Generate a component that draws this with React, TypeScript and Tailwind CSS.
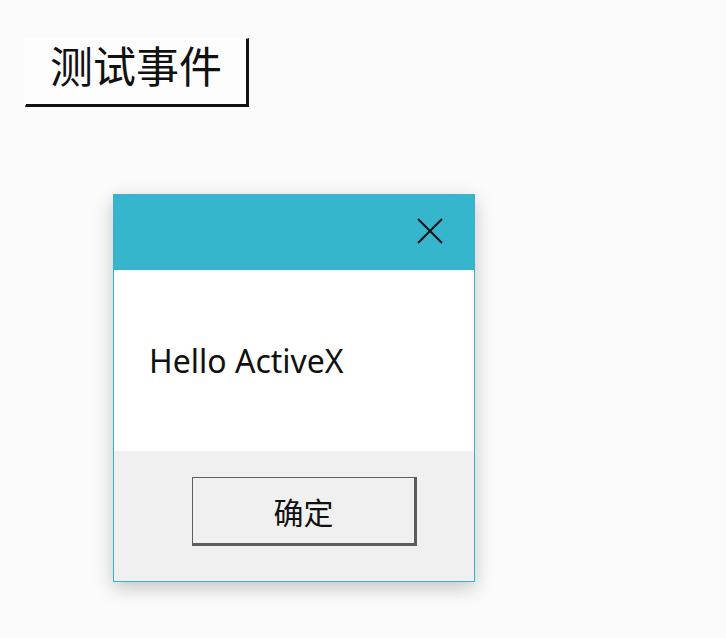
import { FC } from "react";

/**
 * Close glyph for the dialog title bar.
 */
const CloseIcon: FC = () => (
  <svg width="26" height="26" viewBox="0 0 26 26" fill="none">
    <path d="M1 1L25 25M25 1L1 25" stroke="#111" strokeWidth="2" />
  </svg>
);

/**
 * ActiveX message box demo.
 */
const App: FC = () => {
  return (
    <div className="min-h-[638px] w-full bg-[#fbfbfb] pt-[38px] pl-[25px] font-['Noto_Sans','Noto_Sans_CJK_SC',sans-serif] text-[#111]">
      <button className="flex h-[69px] w-[224px] items-center justify-center border-t border-l border-white border-r-[3px] border-b-[3px] border-r-[#111] border-b-[#111] bg-[#fdfdfd] pb-[14px] text-[43px] leading-none font-['Noto_Sans_CJK_SC',sans-serif]">
        测试事件
      </button>

      <div className="mt-[87px] ml-[88px] flex h-[388px] w-[362px] flex-col border border-[#3fb0cc] shadow-[0_6px_18px_rgba(0,0,0,0.22)]">
        <div className="flex h-[75px] shrink-0 items-center justify-end bg-[#36b6cc] pr-[31px] pb-[4px]">
          <CloseIcon />
        </div>

        <div className="flex h-[181px] shrink-0 items-center bg-white pl-[35px]">
          <p className="text-[32px] leading-none text-[#111]">Hello ActiveX</p>
        </div>

        <div className="flex-1 bg-[#f0f0f0] pt-[26px] pl-[78px]">
          <button className="flex h-[69px] w-[225px] items-center justify-center border-t border-l border-r-[3px] border-b-[3px] border-[#5c5c5c] bg-[#f0f0f0] text-[30px] leading-none font-['Noto_Sans_CJK_SC',sans-serif] text-[#111]">
            确定
          </button>
        </div>
      </div>
    </div>
  );
};

export default App;
